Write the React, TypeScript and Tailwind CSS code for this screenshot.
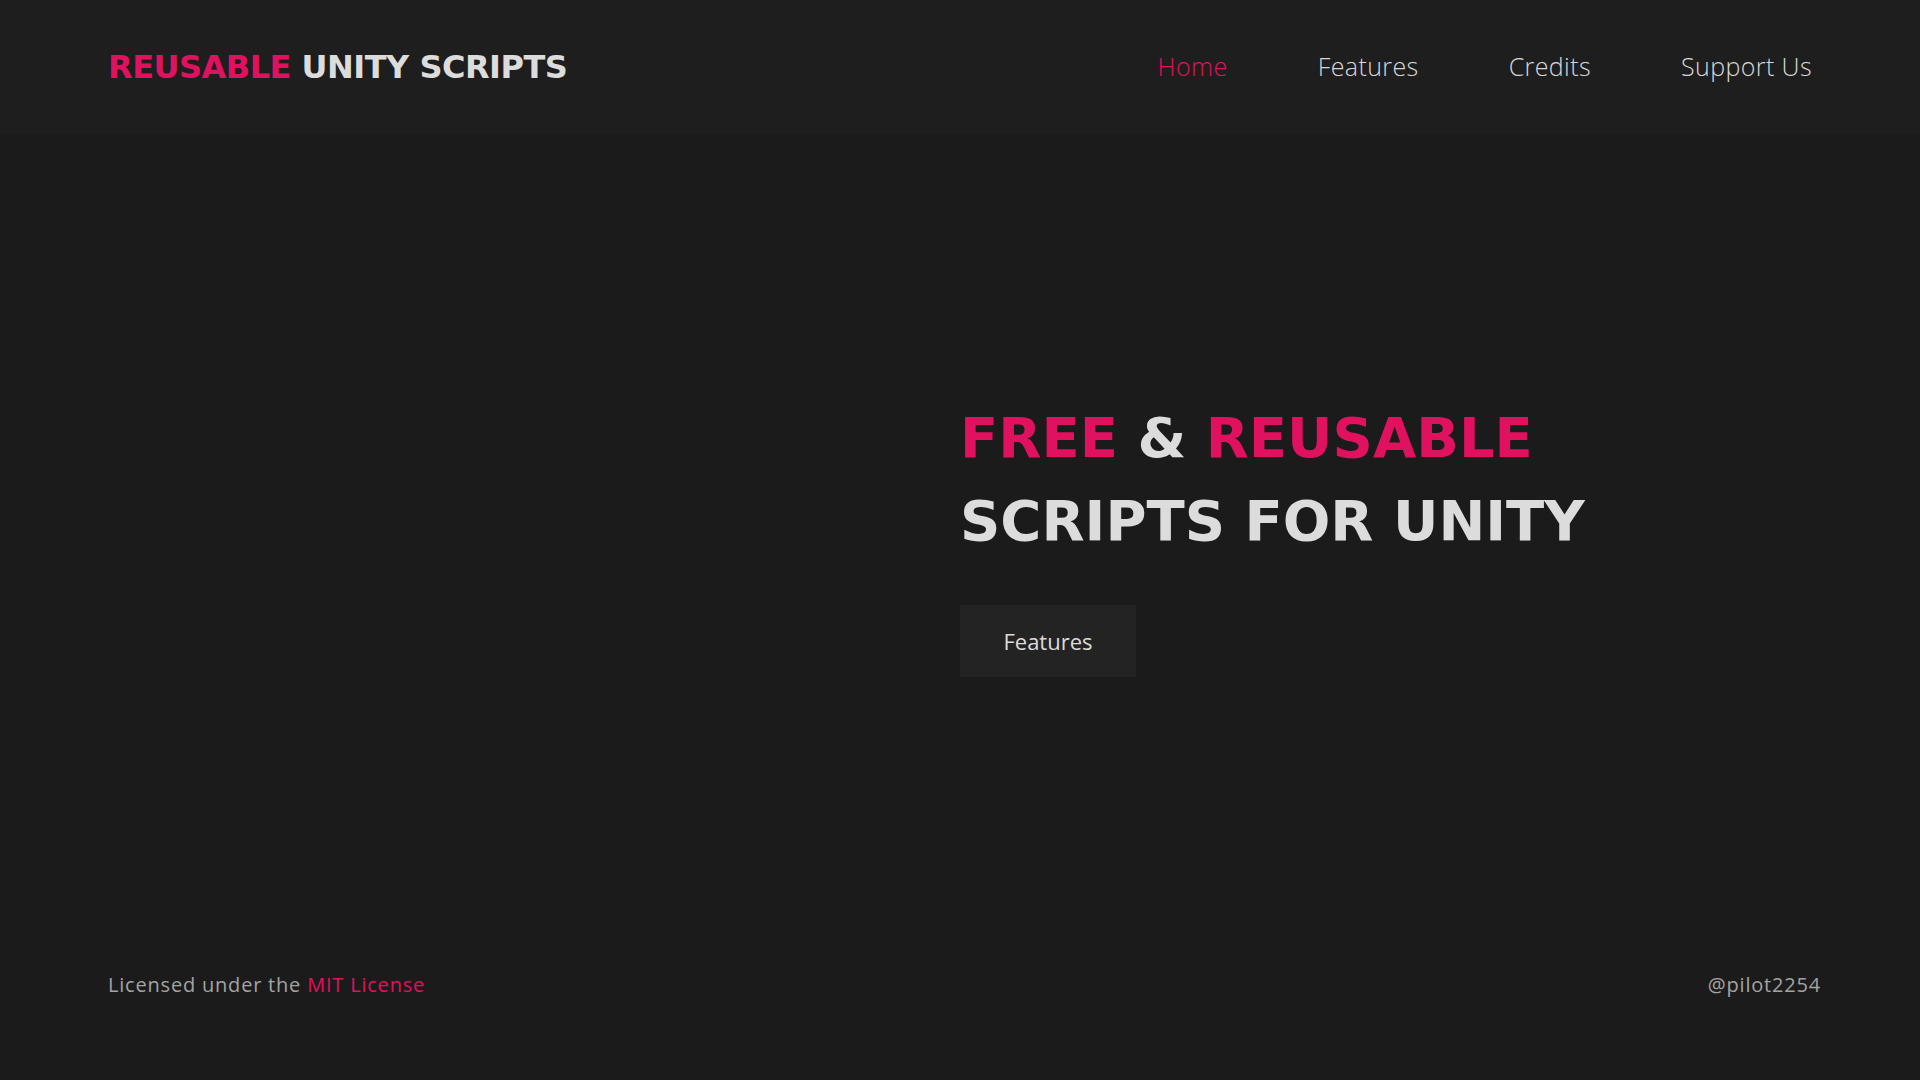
const navLinks = [
  { label: 'Home', active: true },
  { label: 'Features', active: false },
  { label: 'Credits', active: false },
  { label: 'Support Us', active: false },
]

function Header() {
  return (
    <header className="h-[134px] bg-[#1e1e1e] flex items-center justify-between px-[108px]">
      <a href="#" className="font-['DejaVu_Sans',sans-serif] font-bold text-[32px] leading-none tracking-[-0.5px]">
        <span className="text-[#e0115f]">REUSABLE</span>{' '}
        <span className="text-[#dcdcdc]">UNITY SCRIPTS</span>
      </a>
      <nav className="flex items-center gap-[90px] font-['Open_Sans',sans-serif] text-[25px] tracking-[0.4px] font-light">
        {navLinks.map((link) => (
          <a
            key={link.label}
            href="#"
            className={link.active ? 'text-[#e0115f]' : 'text-[#d8d8d8] hover:text-[#e0115f] transition-colors'}
          >
            {link.label}
          </a>
        ))}
      </nav>
    </header>
  )
}

function Hero() {
  return (
    <main className="grid grid-cols-2 pt-[262px]">
      <div />
      <div>
        <h1 className="font-['DejaVu_Sans',sans-serif] font-bold text-[56px] leading-[83px] text-[#dcdcdc]">
          <span className="text-[#e0115f]">FREE</span> &amp; <span className="text-[#e0115f]">REUSABLE</span>
          <br />
          SCRIPTS FOR UNITY
        </h1>
        <button className="mt-[43px] h-[72px] w-[176px] bg-[#232323] text-[#dcdcdc] font-['Open_Sans',sans-serif] text-[22px] hover:bg-[#2a2a2a] transition-colors">
          Features
        </button>
      </div>
    </main>
  )
}

function Footer() {
  return (
    <footer className="h-[190px] flex items-center justify-between pl-[108px] pr-[99px] font-['Open_Sans',sans-serif] text-[20px] tracking-[0.8px] text-[#a3a3a3]">
      <p>
        Licensed under the <a href="#" className="text-[#e0115f]">MIT License</a>
      </p>
      <p>@pilot2254</p>
    </footer>
  )
}

export default function App() {
  return (
    <div className="min-h-screen bg-[#1b1b1b] flex flex-col">
      <Header />
      <div className="flex-1">
        <Hero />
      </div>
      <Footer />
    </div>
  )
}
